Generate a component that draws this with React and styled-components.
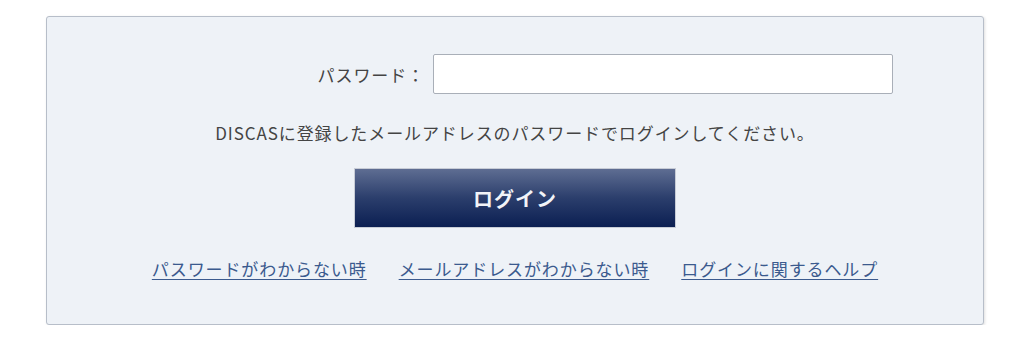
import React from "react";
import styled, { createGlobalStyle } from "styled-components";

const Global = createGlobalStyle`
  html, body { margin: 0; padding: 0; background: #ffffff; }
  body { font-family: "Noto Sans CJK JP", "Noto Sans", sans-serif; color: #444; }
`;

const Page = styled.div`
  padding: 16px 0 0 46px;
`;

const Panel = styled.div`
  box-sizing: border-box;
  width: 938px;
  height: 309px;
  background: #eef2f7;
  border: 1px solid #b7bec9;
  border-radius: 3px;
  box-shadow: 1px 1px 3px rgba(0, 0, 0, 0.12);
  display: flex;
  flex-direction: column;
  align-items: center;
  padding-top: 37px;
`;

const FieldRow = styled.div`
  align-self: stretch;
  display: flex;
  align-items: center;
  padding-left: 258px;
`;

const Label = styled.label`
  width: 120px;
  margin-right: 8px;
  text-align: right;
  font-size: 17px;
  letter-spacing: 0.9px;
  color: #444;
  white-space: nowrap;
`;

const Input = styled.input`
  box-sizing: border-box;
  width: 460px;
  height: 40px;
  border: 1px solid #a9afb8;
  border-radius: 2px;
  background: #fff;
  outline: none;
  font-size: 16px;
  padding: 0 8px;
`;

const Note = styled.p`
  margin: 27px 0 0;
  font-size: 17px;
  letter-spacing: 0.9px;
  line-height: 24px;
  color: #444;
  white-space: nowrap;
`;

const LoginButton = styled.button`
  box-sizing: border-box;
  margin-top: 23px;
  width: 322px;
  height: 60px;
  border: 1px solid #c7ccd6;
  border-radius: 0;
  background: linear-gradient(to bottom, #5e6d92 0%, #2b3e6c 50%, #0b1f52 100%);
  color: #f2f4f8;
  font-family: "Noto Sans CJK JP", sans-serif;
  font-size: 20px;
  font-weight: 700;
  letter-spacing: 1px;
  cursor: pointer;
`;

const Links = styled.div`
  margin-top: 29px;
  display: flex;
  gap: 32px;
`;

const HelpLink = styled.a`
  font-size: 17px;
  letter-spacing: 0.9px;
  line-height: 24px;
  color: #3b5a8e;
  text-decoration: underline;
  text-underline-offset: 3px;
  white-space: nowrap;
  cursor: pointer;
`;

export default function App() {
  return (
    <Page>
      <Global />
      <Panel>
        <FieldRow>
          <Label>パスワード：</Label>
          <Input type="password" />
        </FieldRow>
        <Note>DISCASに登録したメールアドレスのパスワードでログインしてください。</Note>
        <LoginButton>ログイン</LoginButton>
        <Links>
          <HelpLink>パスワードがわからない時</HelpLink>
          <HelpLink>メールアドレスがわからない時</HelpLink>
          <HelpLink>ログインに関するヘルプ</HelpLink>
        </Links>
      </Panel>
    </Page>
  );
}
